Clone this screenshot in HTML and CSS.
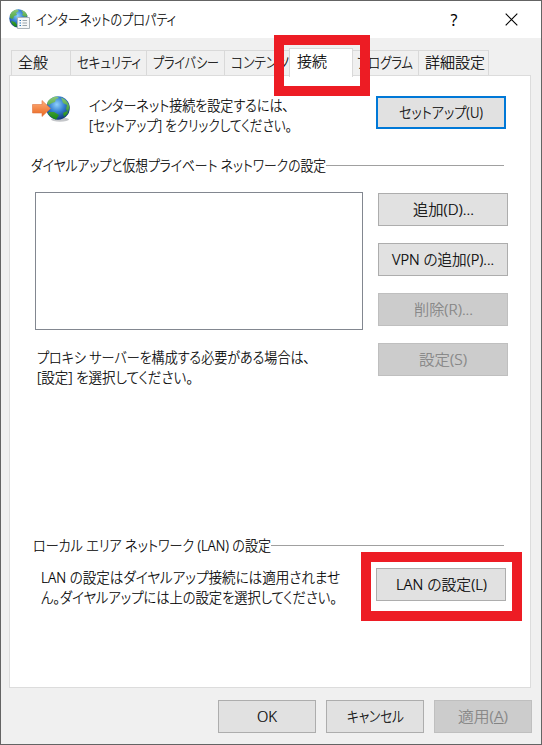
FILE: index.html
```html
<!DOCTYPE html>
<html lang="ja">
<head>
<meta charset="utf-8">
<title>インターネットのプロパティ</title>
<link rel="stylesheet" href="styles.css">
</head>
<body>
<div class="window">
  <header class="titlebar">
    <svg class="app-icon" width="21" height="21" viewBox="0 0 21 21">
      <defs>
        <radialGradient id="sea" cx=".45" cy=".35" r=".65"><stop offset="0" stop-color="#8fd0fa"/><stop offset=".5" stop-color="#347fd0"/><stop offset="1" stop-color="#123779"/></radialGradient>
        <linearGradient id="land" x2="0" y2="1"><stop stop-color="#8bc878"/><stop offset="1" stop-color="#16870e"/></linearGradient>
      </defs>
      <circle cx="9.5" cy="9.5" r="9.2" fill="url(#sea)"/>
      <path d="M1 6Q3 1 8 .5L10 2 7 4 8 6 5 7 4 10 1 9ZM12 1Q17 2 18.5 7L16 8 13 6 14 4ZM2 12L6 13 8 16 7 18Q3 16 2 12Z" fill="url(#land)"/>
      <path d="M8.5 8.5H20.5V19.5H8.5Z" fill="#f5f7f8" stroke="#a9b2b8"/>
      <path d="M10.5 11.5h1.5M10.5 14h1.5M10.5 16.5h1.5" stroke="#2878bd" stroke-width="1.2"/>
      <path d="M13.5 11.5H18M13.5 14H18M13.5 16.5H18" stroke="#9ca6ad"/>
    </svg>
    <span class="t title" data-w="140">インターネットのプロパティ</span>
    <span class="help">?</span>
    <svg class="close" width="13" height="13" viewBox="0 0 13 13"><path d="M.7.7L12.3 12.3M12.3.7L.7 12.3" stroke="#000" stroke-width="1.15"/></svg>
  </header>
  <nav class="tabs">
    <div class="tab general"><span class="t" data-w="30">全般</span></div>
    <div class="tab security"><span class="t" data-w="64">セキュリティ</span></div>
    <div class="tab privacy"><span class="t" data-w="66">プライバシー</span></div>
    <div class="tab content"><span class="t" data-w="58">コンテンツ</span></div>
    <div class="tab selected"><span class="t" data-w="30">接続</span></div>
    <div class="tab programs"><span class="t" data-w="56">プログラム</span></div>
    <div class="tab advanced"><span class="t" data-w="60">詳細設定</span></div>
  </nav>
  <main class="page">
    <section class="intro">
      <svg class="globe" width="40" height="30" viewBox="0 0 40 30">
        <defs><linearGradient id="arrow" x2="0" y2="1"><stop stop-color="#ffb07c"/><stop offset="1" stop-color="#e8641c"/></linearGradient></defs>
        <ellipse cx="28" cy="24.500" rx="9" ry="2.2" fill="#c4c6c9"/>
        <circle cx="26" cy="13" r="11.800" fill="url(#sea)"/>
        <path d="M16 6Q20 1.5 25 1.5L27 3 24 4 23 7 20 8 17 10 15 9ZM29 2.500Q36 5 37.500 12L36 17 34 14 35 10 31 8 30 5ZM17 17L22 17 27 20 24 24.500Q18 22 16 18ZM31 18L35 16 36 18 32 22Z" fill="url(#land)"/>
        <path d="M.5 9.500H10V5.500L18.500 13.500 10 21.500V18H.5Z" fill="url(#arrow)" stroke="#df7440" stroke-width=".6"/>
      </svg>
      <p class="copy"><span class="t" data-w="200">インターネット接続を設定するには、</span><br><span class="t" data-w="203">[セットアップ] をクリックしてください。</span></p>
      <button class="btn default"><span class="t" data-w="84">セットアップ(U)</span></button>
    </section>
    <h2 class="group dial"><span class="t" data-w="295">ダイヤルアップと仮想プライベート ネットワークの設定</span></h2>
    <section class="connections">
      <div class="left">
        <div class="listbox"></div>
        <p class="copy"><span class="t" data-w="273">プロキシ サーバーを構成する必要がある場合は、</span><br><span class="t" data-w="156">[設定] を選択してください。</span></p>
      </div>
      <div class="actions">
        <button class="btn"><span class="t" data-w="61">追加(D)...</span></button>
        <button class="btn"><span class="t" data-w="102">VPN の追加(P)...</span></button>
        <button class="btn" disabled><span class="t" data-w="59">削除(R)...</span></button>
        <button class="btn" disabled><span class="t" data-w="48">設定(S)</span></button>
      </div>
    </section>
    <h2 class="group lan"><span class="t" data-w="238">ローカル エリア ネットワーク (LAN) の設定</span></h2>
    <section class="lan-row">
      <p class="copy"><span class="t" data-w="299">LAN の設定はダイヤルアップ接続には適用されませ</span><br><span class="t" data-w="296">ん。ダイヤルアップには上の設定を選択してください。</span></p>
      <button class="btn"><span class="t" data-w="91">LAN の設定(L)</span></button>
    </section>
  </main>
  <footer class="footer">
    <button class="btn"><span class="t" data-w="20">OK</span></button>
    <button class="btn"><span class="t" data-w="57">キャンセル</span></button>
    <button class="btn" disabled><span class="t" data-w="50">適用(<u>A</u>)</span></button>
  </footer>
  <div class="mark mark-tab"></div>
  <div class="mark mark-lan"></div>
</div>
<script src="fit.js"></script>
</body>
</html>
```
FILE: styles.css
```css
* { box-sizing: border-box; }
body { margin: 0; font: 15px/20px "Noto Sans", "Noto Sans CJK JP", sans-serif; color: #000; }
.window { position: relative; width: 542px; height: 745px; background: #f0f0f0; border: 1px solid #646464; overflow: hidden; }
.t { display: inline-block; white-space: nowrap; transform-origin: left center; font-feature-settings: "palt"; font-weight: 300; -webkit-text-stroke: .2px currentColor; }
.titlebar { display: flex; align-items: center; height: 37px; padding-left: 8px; background: #fff; }
.title { margin-top: -1px; }
.app-icon { margin-right: 6px; }
.help { width: 12px; margin-left: auto; text-align: center; font-size: 16px; }
.close { margin: 0 23px 0 45px; }
.tabs { display: flex; align-items: flex-end; height: 37px; padding-left: 10px; }
.tab { height: 25px; padding: 1px 0 0 6px; border: 1px solid #d9d9d9; border-width: 1px 1px 0 0; }
.general { width: 60px; padding-left: 6px; border-left-width: 1px; }
.security { width: 76px; }
.privacy { width: 78px; padding-left: 6px; }
.content { width: 64px; border-right: 0; padding-left: 6px; }
.selected { position: relative; width: 64px; height: 29px; margin-bottom: -2px; padding: 2px 0 0 7px; border-left-width: 1px; background: #fff; }
.programs { width: 66px; padding-left: 4px; }
.advanced { width: 70px; padding-left: 6px; }
.page { width: 522px; height: 613px; margin-left: 8px; border: 1px solid #dcdcdc; background: #fff; }
.intro { display: flex; height: 79px; padding: 20px 0 0 22px; }
.globe { flex: none; margin-top: -1px; }
.copy { margin: 0; }
.intro .copy { flex: none; width: 287px; margin: -1px 0 0 17px; }
.btn { display: flex; align-items: center; justify-content: center; flex: none; width: 130px; height: 33px; padding: 0 0 2px; border: 1px solid #adadad; border-radius: 0; background: #e1e1e1; color: #000; font: inherit; }
.btn.default { border: 2px solid #0078d7; }
.btn:disabled { background: #ccc; border-color: #bfbfbf; color: #838383; }
.group { display: flex; align-items: center; margin: 0 26px 0 21px; height: 20px; font: inherit; }
.group::after { content: ""; flex: 1; height: 1px; background: #a0a0a0; }
.group.lan { margin-left: 23px; }
.connections { display: flex; height: 360px; padding: 17px 0 0 25px; }
.left { width: 343px; }
.listbox { width: 328px; height: 138px; border: 1px solid #828790; }
.left .copy { margin: 17px 0 0 2px; }
.actions { display: flex; flex-direction: column; gap: 17px; padding-top: 1px; }
.lan-row { display: flex; padding: 13px 0 0 31px; }
.lan-row .copy { width: 335px; margin-top: -1px; }
.footer { display: flex; gap: 10px; padding: 12px 0 0 217px; }
.footer .btn { width: 98px; }
.mark { position: absolute; border: 10px solid #ed1c24; }
.mark-tab { left: 273px; top: 34px; width: 96px; height: 61px; }
.mark-lan { left: 360px; top: 551px; width: 161px; height: 69px; }
```
FILE: fit.js
```js
document.querySelectorAll('.t').forEach(function (el) {
  var target = Number(el.dataset.w);
  var natural = el.getBoundingClientRect().width;
  el.style.transform = 'scaleX(' + target / natural + ')';
  el.style.marginRight = (target - natural) + 'px';
});
```
